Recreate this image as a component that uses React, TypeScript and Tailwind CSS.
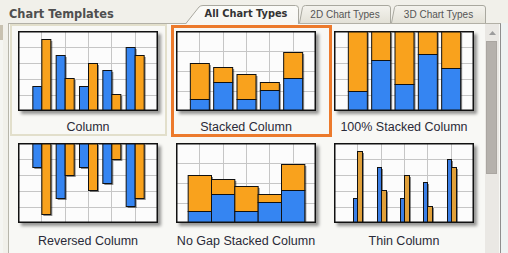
import React from "react";

const BLUE = "#3585f2";
const ORANGE = "#f9a21d";
const THIN_BLUE = "#3b7fe6";
const THIN_ORANGE = "#e0a03a";

// pair centres sit on the vertical grid lines
const centers = [1, 2, 3, 4, 5].map((i) => (i * 140) / 6);

const colBlue = [24, 55, 24, 40, 63];
const colOrange = [71, 32, 47, 16, 55];
const stackTotal = [47, 43, 36, 28, 58];
const stackBlue = [11, 28, 11, 20, 32];
const pctBlue = [19, 50, 26, 56, 42];

function Chart({ rows, children }: { rows: number; children: React.ReactNode }) {
  const hs = Array.from({ length: rows - 1 }, (_, j) => Math.round(((j + 1) * 80) / rows) + 0.5);
  return (
    <div className="w-[140px] h-[80px] shadow-[3px_3px_3px_rgba(0,0,0,0.4)]">
      <svg width="140" height="80" viewBox="0 0 140 80" className="block">
        <rect width="140" height="80" fill="#fcfcfc" />
        {centers.map((x) => (
          <line key={x} x1={Math.round(x) + 0.5} x2={Math.round(x) + 0.5} y1={0} y2={80} stroke="#c6c6c6" />
        ))}
        {hs.map((y) => (
          <line key={y} x1={0} x2={140} y1={y} y2={y} stroke="#c6c6c6" />
        ))}
        {children}
        <rect x="0.75" y="0.75" width="138.5" height="78.5" fill="none" stroke="#111" strokeWidth="1.5" />
      </svg>
    </div>
  );
}

function Bar({ x, y, w, h, fill }: { x: number; y: number; w: number; h: number; fill: string }) {
  return (
    <g>
      <rect x={x + 2} y={y + 2} width={w} height={h} fill="#000" opacity="0.45" />
      <rect x={x + 0.5} y={y + 0.5} width={w} height={h} fill={fill} stroke="#111" strokeWidth="1" />
    </g>
  );
}

function Stack({ x, w, total, blue }: { x: number; w: number; total: number; blue: number }) {
  const top = 79 - total;
  return (
    <g>
      <rect x={x + 2} y={top + 2} width={w} height={total} fill="#000" opacity="0.45" />
      <rect x={x + 0.5} y={top + 0.5} width={w} height={total - blue} fill={ORANGE} stroke="#111" />
      <rect x={x + 0.5} y={79 - blue + 0.5} width={w} height={blue} fill={BLUE} stroke="#111" />
    </g>
  );
}

const ColumnChart = () => (
  <Chart rows={5}>
    {centers.map((c, i) => (
      <g key={i}>
        <Bar x={c - 9} y={79 - colBlue[i]} w={9} h={colBlue[i]} fill={BLUE} />
        <Bar x={c} y={79 - colOrange[i]} w={9} h={colOrange[i]} fill={ORANGE} />
      </g>
    ))}
  </Chart>
);

const StackedChart = () => (
  <Chart rows={4}>
    {centers.map((c, i) => (
      <Stack key={i} x={c - 9.5} w={19} total={stackTotal[i]} blue={stackBlue[i]} />
    ))}
  </Chart>
);

const PercentChart = () => (
  <Chart rows={5}>
    {centers.map((c, i) => (
      <Stack key={i} x={c - 9.5} w={19} total={79} blue={pctBlue[i]} />
    ))}
  </Chart>
);

const ReversedChart = () => (
  <Chart rows={5}>
    {centers.map((c, i) => (
      <g key={i}>
        <Bar x={c - 9} y={0} w={9} h={colBlue[i]} fill={BLUE} />
        <Bar x={c} y={0} w={9} h={colOrange[i]} fill={ORANGE} />
      </g>
    ))}
  </Chart>
);

const NoGapChart = () => (
  <Chart rows={4}>
    {centers.map((c, i) => (
      <Stack key={i} x={c - 70 / 6} w={140 / 6} total={stackTotal[i]} blue={stackBlue[i]} />
    ))}
  </Chart>
);

const ThinChart = () => (
  <Chart rows={5}>
    {centers.map((c, i) => (
      <g key={i}>
        <Bar x={Math.round(c) - 4} y={79 - colBlue[i]} w={4} h={colBlue[i]} fill={THIN_BLUE} />
        <Bar x={Math.round(c)} y={79 - colOrange[i]} w={5} h={colOrange[i]} fill={THIN_ORANGE} />
      </g>
    ))}
  </Chart>
);

const templates = [
  { label: "Column", chart: <ColumnChart />, state: "hover" },
  { label: "Stacked Column", chart: <StackedChart />, state: "selected" },
  { label: "100% Stacked Column", chart: <PercentChart />, state: "" },
  { label: "Reversed Column", chart: <ReversedChart />, state: "" },
  { label: "No Gap Stacked Column", chart: <NoGapChart />, state: "" },
  { label: "Thin Column", chart: <ThinChart />, state: "" },
];

function Tab({
  label,
  width,
  active,
  id,
  textClass,
}: {
  label: string;
  width: number;
  active?: boolean;
  id: string;
  textClass: string;
}) {
  const h = active ? 19 : 18;
  const d = active
    ? `M0.5,${h} L14,2 Q15.5,0.5 18,0.5 L${width - 3.5},0.5 Q${width - 0.5},0.5 ${width - 0.5},3.5 L${width - 0.5},${h}`
    : `M0.5,${h} L3.5,2.5 Q4,0.5 6.5,0.5 L${width - 3},0.5 Q${width - 0.5},0.5 ${width - 0.5},3 L${width - 0.5},${h}`;
  return (
    <div
      className={`relative flex items-center justify-center ${active ? "h-[19px] -mb-[1px] z-10 pl-[8px]" : "h-[18px]"}`}
      style={{ width }}
    >
      <svg className="absolute inset-0" width={width} height={h} viewBox={`0 0 ${width} ${h}`}>
        <defs>
          <linearGradient id={id} x1="0" y1="0" x2="0" y2="1">
            <stop offset="0" stopColor={active ? "#fbfbf8" : "#f4f3ee"} />
            <stop offset="1" stopColor={active ? "#f7f7f3" : "#e3e1d7"} />
          </linearGradient>
        </defs>
        <path d={d + " Z"} fill={`url(#${id})`} />
        <path d={d} fill="none" stroke="#a9a89f" />
      </svg>
      <span className={`relative ${textClass}`}>{label}</span>
    </div>
  );
}

export default function App() {
  return (
    <div className="w-[508px] h-[253px] overflow-hidden bg-[#f1f0ea] flex flex-col">
      {/* header: title + tabs */}
      <div className="h-[23px] flex items-end shrink-0">
        <div className="w-[185px] self-start pt-[7px] pl-[9px] leading-[14px] text-[11.4px] font-bold text-[#4f4f4f] font-['DejaVu_Sans',sans-serif]">
          Chart Templates
        </div>
        <Tab
          label="All Chart Types"
          width={114}
          active
          id="t1"
          textClass="text-[9.8px] font-bold text-[#333] font-['DejaVu_Sans',sans-serif]"
        />
        <Tab
          label="2D Chart Types"
          width={92}
          id="t2"
          textClass="text-[10px] text-[#555] font-['Liberation_Sans',Arial,sans-serif]"
        />
        <Tab
          label="3D Chart Types"
          width={95}
          id="t3"
          textClass="text-[10px] text-[#555] font-['Liberation_Sans',Arial,sans-serif]"
        />
      </div>

      {/* body */}
      <div className="flex flex-1">
        <div className="w-[8px] flex">
          <div className="w-[3px] flex flex-col pt-[2px]">
            <div className="h-[15px] bg-[#c8c1b0]" />
            <div className="flex-1 bg-[#f5f5f2]" />
          </div>
        </div>

        <div className="w-[493px] border-l border-t border-r border-l-[#b7b5ab] border-t-[#b2b0a6] border-r-[#8e8e8e] bg-[#f8f8f5] flex">
          <div className="grid grid-cols-[158px_158px_158px] auto-rows-[112px] w-[474px]">
            {templates.map((t, i) => (
              <div key={t.label} className="relative flex flex-col items-center pt-[7px]">
                {t.state === "hover" && (
                  <div className="absolute left-[1px] top-0 w-[157px] h-[112px] border-2 border-[#e2dfcb]" />
                )}
                {t.state === "selected" && (
                  <div className="absolute left-[4px] top-[1px] w-[161px] h-[112px] border-[3px] border-[#ec7a2c]" />
                )}
                {t.chart}
                <div
                  className={`relative leading-[14px] text-[12.5px] text-[#2a2a38] font-['Liberation_Sans',Arial,sans-serif] whitespace-nowrap ${
                    i < 3 ? "mt-[9px]" : "mt-[11px]"
                  }`}
                >
                  {t.label}
                </div>
              </div>
            ))}
          </div>

          {/* scrollbar */}
          <div className="ml-[2px] w-[14px] bg-[#eae8e4] flex flex-col">
            <div className="h-[17px] flex items-center justify-center">
              <svg width="7" height="4" viewBox="0 0 7 4">
                <path d="M0,4 L3.5,0 L7,4 Z" fill="#9c9c9c" />
              </svg>
            </div>
            <div className="ml-[1px] w-[11px] h-[133px] bg-[#b5b1ac] border border-[#aaa6a1]" />
          </div>
        </div>

        <div className="flex-1 bg-[#eef2f2]" />
      </div>
    </div>
  );
}
